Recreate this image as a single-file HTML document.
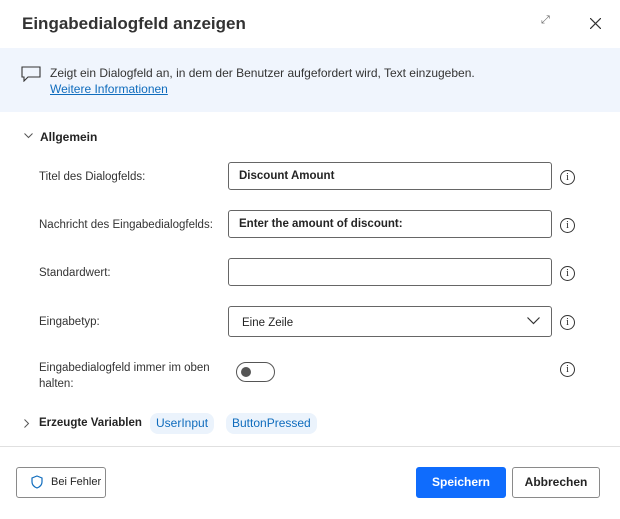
<!DOCTYPE html><html><head><style>
body{margin:0;width:620px;height:519px;background:#fff;font-family:"Liberation Sans",sans-serif;color:#242424;position:relative;overflow:hidden;font-size:12px}
.a{position:absolute;white-space:nowrap}
.inp{position:absolute;left:228px;width:324px;height:28px;border:1px solid #666;border-radius:3px;font-size:11.5px;font-weight:bold;line-height:27px;padding-left:10px;box-sizing:border-box}
.lbl{position:absolute;left:39px;font-size:11.5px;color:#333;white-space:nowrap}
.info{position:absolute;left:560px;width:13px;height:13px;border:1px solid #333;border-radius:50%;font-size:10px;text-align:center;line-height:13px;font-family:"Liberation Serif",serif}
.chip{position:absolute;top:413px;height:21px;background:#ebf3fc;border-radius:8px;color:#0f6cbd;font-size:12px;line-height:21px;padding:0 6px}
.btn{position:absolute;top:467px;height:31px;border:1px solid #8a8a8a;border-radius:3px;font-size:12px;font-weight:bold;line-height:29px;text-align:center;box-sizing:border-box;white-space:nowrap}
</style></head><body>
<div class="a" style="left:22px;top:14px;font-size:17px;font-weight:bold;color:#333">Eingabedialogfeld anzeigen</div>
<div class="a" style="left:541px;top:14px;font-size:11px;color:#666">⤢</div>
<svg class="a" style="left:590px;top:18px" width="11" height="11"><path d="M0 0L11 11M11 0L0 11" stroke="#333" stroke-width="1.2"/></svg>
<div class="a" style="left:0;top:48px;width:620px;height:64px;background:#f0f5fd"></div>
<svg class="a" style="left:21px;top:66px" width="20" height="16"><path d="M1 1H19V11H7L3 15V11H1Z" fill="none" stroke="#333" stroke-width="1.1"/></svg>
<div class="a" style="left:50px;top:66px;font-size:12px;color:#333">Zeigt ein Dialogfeld an, in dem der Benutzer aufgefordert wird, Text einzugeben.</div>
<div class="a" style="left:50px;top:82px;font-size:12px;color:#0f6cbd;text-decoration:underline">Weitere Informationen</div>
<svg class="a" style="left:24px;top:133px" width="9" height="6"><path d="M0.5 0.5L4.5 4.5L8.5 0.5" fill="none" stroke="#555"/></svg>
<div class="a" style="left:40px;top:130px;font-weight:bold;font-size:12px">Allgemein</div>
<div class="lbl" style="top:171px">Titel des Dialogfelds:</div>
<div class="inp" style="top:162px">Discount Amount</div><div class="info" style="top:170px">i</div>
<div class="lbl" style="top:219px">Nachricht des Eingabedialogfelds:</div>
<div class="inp" style="top:210px">Enter the amount of discount:</div><div class="info" style="top:218px">i</div>
<div class="lbl" style="top:267px">Standardwert:</div>
<div class="inp" style="top:258px"></div><div class="info" style="top:266px">i</div>
<div class="lbl" style="top:316px">Eingabetyp:</div>
<div class="inp" style="top:306px;height:31px;line-height:32px;font-weight:normal;padding-left:13px">Eine Zeile</div>
<svg class="a" style="left:527px;top:317px" width="13" height="8"><path d="M0.5 0.5L6.5 6.5L12.5 0.5" fill="none" stroke="#333" stroke-width="1.2"/></svg>
<div class="info" style="top:315px">i</div>
<div class="lbl" style="top:360px;line-height:16px">Eingabedialogfeld immer im oben<br>halten:</div>
<div class="a" style="left:236px;top:362px;width:39px;height:20px;border:1px solid #555;border-radius:10px;box-sizing:border-box"></div>
<div class="a" style="left:241px;top:367px;width:10px;height:10px;border-radius:50%;background:#555"></div>
<div class="info" style="top:362px">i</div>
<svg class="a" style="left:24px;top:419px" width="6" height="9"><path d="M0.5 0.5L4.5 4.5L0.5 8.5" fill="none" stroke="#555"/></svg>
<div class="a" style="left:39px;top:417px;font-weight:bold;font-size:11.5px">Erzeugte Variablen</div>
<div class="chip" style="left:150px">UserInput</div>
<div class="chip" style="left:226px">ButtonPressed</div>
<div class="a" style="left:0;top:446px;width:620px;height:1px;background:#e0e0e0"></div>
<div class="btn" style="left:16px;width:90px;font-weight:normal;font-size:11px;color:#242424;text-align:left;padding-left:34px">Bei Fehler</div>
<svg class="a" style="left:31px;top:475px" width="12" height="14"><path d="M6 1L11 3V7C11 10 8.5 12 6 13C3.5 12 1 10 1 7V3Z" fill="none" stroke="#0f6cbd" stroke-width="1.2"/></svg>
<div class="btn" style="left:416px;width:90px;background:#0f6cfd;border-color:#0f6cfd;color:#fff">Speichern</div>
<div class="btn" style="left:512px;width:88px">Abbrechen</div>
</body></html>
